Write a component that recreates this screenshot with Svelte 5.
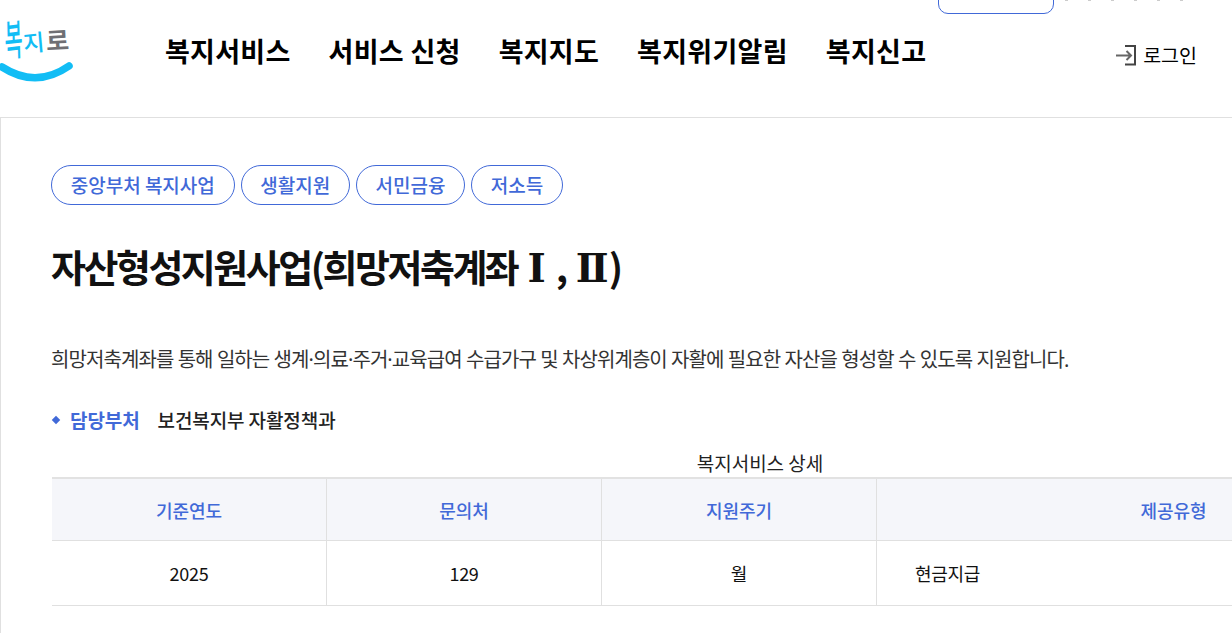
<script>
  const menus = ["복지서비스", "서비스 신청", "복지지도", "복지위기알림", "복지신고"];
  const tags = ["중앙부처 복지사업", "생활지원", "서민금융", "저소득"];
  const heads = ["기준연도", "문의처", "지원주기", "제공유형"];
  const row = ["2025", "129", "월", "현금지급"];
</script>

<div class="page">
  <header class="header">
    <div class="top-box"></div>
    <div class="top-dots"><i></i><i></i><i></i><i></i><i></i><i></i></div>
    <a class="logo" href="#top">
      <span class="logo-text"><b class="bok">복</b><b class="ji">지</b><b class="ro">로</b></span>
      <svg class="smile" width="74" height="26" viewBox="0 0 74 26">
        <path d="M2 9 Q36 31 69 8" fill="none" stroke="#12bdf5" stroke-width="7.5" stroke-linecap="round" />
      </svg>
    </a>
    <nav class="nav">
      {#each menus as m}
        <a href="#top">{m}</a>
      {/each}
    </nav>
    <a class="login" href="#top">
      <svg width="22" height="21" viewBox="0 0 22 21">
        <path d="M10 1H20V19.5H10" fill="none" stroke="#444" stroke-width="2" />
        <path d="M1 10.5H16M11.5 6L16 10.5L11.5 15" fill="none" stroke="#666" stroke-width="2" />
      </svg>
      <span>로그인</span>
    </a>
  </header>

  <main class="content">
    <div class="tags">
      {#each tags as t}
        <span class="tag">{t}</span>
      {/each}
    </div>
    <h1>자산형성지원사업(희망저축계좌 <span class="rn">Ⅰ</span> , <span class="rn">Ⅱ</span>)</h1>
    <p class="desc">희망저축계좌를 통해 일하는 생계·의료·주거·교육급여 수급가구 및 차상위계층이 자활에 필요한 자산을 형성할 수 있도록 지원합니다.</p>
    <div class="dept">
      <span class="dia"></span>
      <strong>담당부처</strong>
      <span>보건복지부 자활정책과</span>
    </div>
    <div class="detail">
      <div class="caption">복지서비스 상세</div>
      <div class="table">
        {#each heads as h, i}
          <div class="th" class:wide={i === 3}>{h}</div>
        {/each}
        {#each row as c, i}
          <div class="td" class:wide={i === 3}>{c}</div>
        {/each}
      </div>
    </div>
  </main>
</div>

<style>
  :global(body) {
    margin: 0;
    background: #fff;
    overflow: hidden;
  }

  .page {
    width: 1232px;
    height: 633px;
    overflow: hidden;
    font-family: "Noto Sans CJK KR", "Noto Sans", sans-serif;
    color: #222;
  }

  a {
    color: inherit;
    text-decoration: none;
  }

  .header {
    position: relative;
    height: 117px;
    display: flex;
    align-items: flex-start;
  }

  .top-box {
    position: absolute;
    left: 938px;
    top: -10px;
    width: 114px;
    height: 22px;
    border: 1px solid #4169d8;
    border-radius: 0 0 10px 10px;
  }

  .top-dots {
    position: absolute;
    left: 1065px;
    top: 0;
    display: flex;
    gap: 20px;
  }

  .top-dots i {
    width: 3px;
    height: 1px;
    background: #ccc;
  }

  .logo {
    position: relative;
    width: 74px;
    height: 84px;
    flex: none;
  }

  .logo-text {
    position: absolute;
    left: 3px;
    top: 24px;
    display: flex;
    font-size: 23px;
    line-height: 34px;
    color: #12bdf5;
  }

  .logo-text b {
    display: block;
    font-weight: 500;
  }

  .bok {
    width: 20px;
    transform: translateY(-4px) scale(0.85, 1.85) rotate(-3deg);
  }

  .ji {
    width: 24px;
    transform: rotate(-5deg);
  }

  .ro {
    color: #6f6f74;
    font-size: 25px;
    transform: translate(-1px, -2px) rotate(-3deg);
  }

  .logo-text .ro {
    font-weight: 700;
  }

  .smile {
    position: absolute;
    left: 0;
    top: 58px;
  }

  .nav {
    display: flex;
    gap: 38px;
    margin: 30px 0 0 91px;
    font-size: 27px;
    font-weight: 700;
    line-height: 42px;
    letter-spacing: 0.28px;
    color: #000;
    white-space: nowrap;
  }

  .login {
    position: absolute;
    right: 35px;
    top: 41px;
    display: flex;
    align-items: center;
    gap: 6px;
    font-size: 19.5px;
    line-height: 28px;
    color: #000;
  }

  .content {
    height: 516px;
    box-sizing: border-box;
    border-top: 1px solid #e0e0e0;
    border-left: 1px solid #e0e0e0;
    padding: 47px 0 0 50px;
  }

  .tags {
    display: flex;
    gap: 6px;
  }

  .tag {
    height: 38px;
    padding: 0 18.7px;
    border: 1px solid #4169d8;
    border-radius: 20px;
    font-size: 19px;
    font-weight: 500;
    line-height: 38px;
    color: #4169d8;
    white-space: nowrap;
  }

  h1 {
    margin: 33px 0 0;
    font-size: 38px;
    font-weight: 700;
    line-height: 56px;
    letter-spacing: -2.5px;
    word-spacing: 4px;
    color: #111;
    white-space: nowrap;
  }

  .rn {
    font-family: "DejaVu Serif", serif;
    font-size: 39px;
    line-height: 1;
    letter-spacing: 0;
  }

  .desc {
    margin: 51px 0 0;
    font-family: "Noto Sans", "Noto Sans CJK KR", sans-serif;
    font-size: 20px;
    line-height: 30px;
    letter-spacing: -0.92px;
    color: #333;
    white-space: nowrap;
  }

  .dept {
    display: flex;
    align-items: center;
    margin-top: 30px;
    font-size: 19px;
    line-height: 30px;
    font-weight: 500;
    letter-spacing: -0.1px;
    white-space: nowrap;
  }

  .dia {
    width: 6px;
    height: 6px;
    margin: 0 11px 0 2px;
    background: #4169d8;
    transform: rotate(45deg);
  }

  .dept strong {
    margin-right: 18px;
    font-weight: 700;
    color: #4169d8;
  }

  .detail {
    width: 1416px;
    margin: 14px 0 0 1px;
  }

  .caption {
    font-size: 19px;
    line-height: 28px;
    text-align: center;
  }

  .table {
    display: grid;
    grid-template-columns: 275px 275px 275px 593px;
    border-top: 2px solid #e2e2e2;
  }

  .th,
  .td {
    display: flex;
    align-items: center;
    justify-content: center;
    box-sizing: border-box;
    border-bottom: 1px solid #e0e0e0;
    border-right: 1px solid #e0e0e0;
    font-size: 18px;
  }

  .th {
    height: 62px;
    background: #f5f6fa;
    color: #4169d8;
    font-weight: 500;
  }

  .td {
    height: 65px;
    color: #111;
    letter-spacing: -0.3px;
  }

  .td.wide {
    justify-content: flex-start;
    padding-left: 38px;
  }

  .wide {
    border-right: 0;
  }
</style>
